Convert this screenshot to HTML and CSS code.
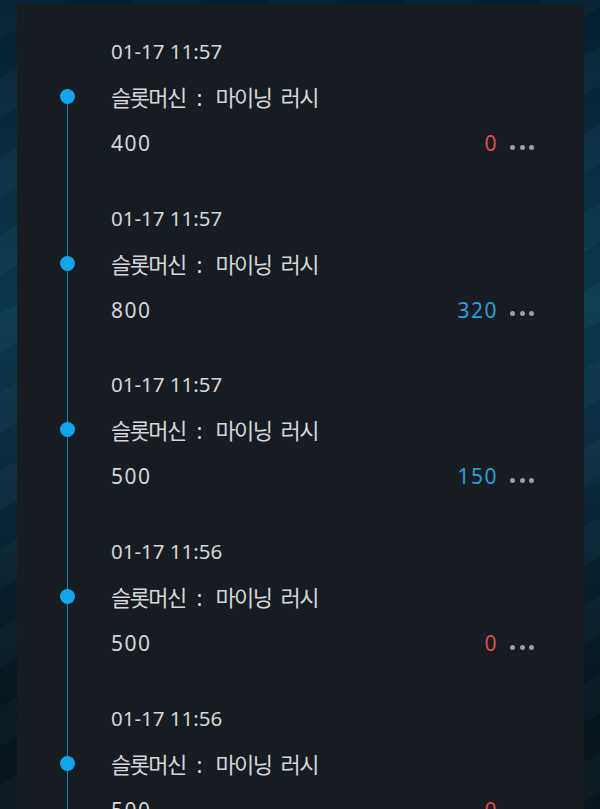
FILE: index.html
```html
<!DOCTYPE html>
<html lang="ko">
<head>
    <meta charset="UTF-8">
    <meta name="viewport" content="width=device-width, initial-scale=1.0">
    <title>게임 기록</title>
    <link rel="stylesheet" href="styles.css">
</head>
<body>

    <div class="panel">
        <ul class="timeline">
            <li class="item">
                <div class="rail"><span class="dot"></span></div>
                <div class="entry">
                    <p class="date">01-17 11:57</p>
                    <p class="title">슬롯머신<span class="sep">:</span>마이닝 러시</p>
                    <div class="amount">
                        <span>400</span>
                        <span class="result"><span class="loss">0</span><span class="more"><i></i><i></i><i></i></span></span>
                    </div>
                </div>
            </li>
            <li class="item">
                <div class="rail"><span class="dot"></span></div>
                <div class="entry">
                    <p class="date">01-17 11:57</p>
                    <p class="title">슬롯머신<span class="sep">:</span>마이닝 러시</p>
                    <div class="amount">
                        <span>800</span>
                        <span class="result"><span class="win">320</span><span class="more"><i></i><i></i><i></i></span></span>
                    </div>
                </div>
            </li>
            <li class="item">
                <div class="rail"><span class="dot"></span></div>
                <div class="entry">
                    <p class="date">01-17 11:57</p>
                    <p class="title">슬롯머신<span class="sep">:</span>마이닝 러시</p>
                    <div class="amount">
                        <span>500</span>
                        <span class="result"><span class="win">150</span><span class="more"><i></i><i></i><i></i></span></span>
                    </div>
                </div>
            </li>
            <li class="item">
                <div class="rail"><span class="dot"></span></div>
                <div class="entry">
                    <p class="date">01-17 11:56</p>
                    <p class="title">슬롯머신<span class="sep">:</span>마이닝 러시</p>
                    <div class="amount">
                        <span>500</span>
                        <span class="result"><span class="loss">0</span><span class="more"><i></i><i></i><i></i></span></span>
                    </div>
                </div>
            </li>
            <li class="item">
                <div class="rail"><span class="dot"></span></div>
                <div class="entry">
                    <p class="date">01-17 11:56</p>
                    <p class="title">슬롯머신<span class="sep">:</span>마이닝 러시</p>
                    <div class="amount">
                        <span>500</span>
                        <span class="result"><span class="loss">0</span><span class="more"><i></i><i></i><i></i></span></span>
                    </div>
                </div>
            </li>
        </ul>
    </div>

</body>
</html>
```

FILE: styles.css
```css
html, body {
    height: 100%;
}
body {
    margin: 0;
    padding: 0;
    overflow: hidden;
    font-family: 'Noto Sans', 'Noto Sans CJK KR', sans-serif;
    color: #d4d6d8;
    background-color: #08202e;
    background-image:
        repeating-linear-gradient(150deg, rgba(255,255,255,0.02) 0 34px, rgba(0,0,0,0.05) 34px 68px),
        linear-gradient(to bottom, #05202f 0%, #083247 25%, #0b3b53 38%, #0a2e42 55%, #08202d 72%, #07161f 88%, #0a1720 100%);
}
.panel {
    margin: 4px 16px 0 17px;
    height: 805px;
    overflow: hidden;
    background: #171c22;
    padding: 24px 50px 0 43px;
    box-sizing: border-box;
}
.timeline {
    list-style: none;
    margin: 0;
    padding: 0;
}
.item {
    display: flex;
    gap: 35px;
}
.rail {
    width: 16px;
    flex-shrink: 0;
    background: linear-gradient(#1f80ad, #1f80ad) no-repeat 7px 0 / 1px 100%;
}
.item:first-child .rail {
    background-position: 7px 69px;
}
.dot {
    display: block;
    width: 15px;
    height: 15px;
    margin-top: 61px;
    border-radius: 50%;
    background: #0fa6ee;
}
.entry {
    flex: 1;
    padding-bottom: 28.7px;
}
.entry p {
    margin: 0;
    font-size: 20px;
    line-height: 46px;
}
.entry .date {
    font-size: 20.5px;
}
.entry .title {
    font-size: 22px;
    letter-spacing: -1.6px;
    word-spacing: 5px;
}
.sep {
    display: inline-block;
    margin: 0 13px 0 11px;
    letter-spacing: 0;
}
.amount {
    display: flex;
    justify-content: space-between;
    align-items: center;
    font-size: 21px;
    letter-spacing: 1.5px;
    line-height: 46px;
}
.result {
    display: flex;
    align-items: center;
    gap: 12px;
}
.loss {
    color: #e34a4c;
}
.win {
    color: #2a9fd8;
}
.more {
    display: flex;
    gap: 4.5px;
    margin-top: 8px;
}
.more i {
    width: 5px;
    height: 5px;
    border-radius: 50%;
    background: #9a9ea4;
}
```
